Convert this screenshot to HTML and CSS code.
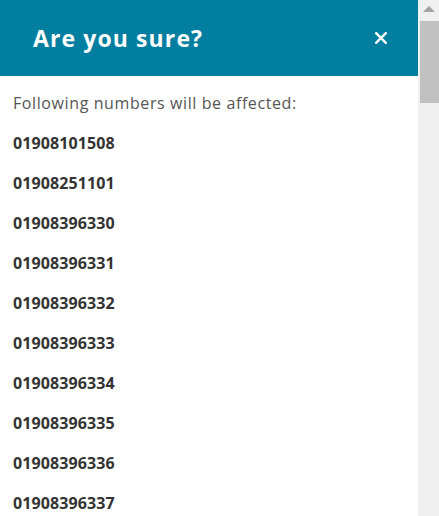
FILE: index.html
```html
<!DOCTYPE html>
<html>
<head>
<meta charset="utf-8">
<link rel="stylesheet" href="styles.css">
</head>
<body>
<div class="page">
  <div class="modal">
    <div class="modal-header">
      <h1 class="modal-title">Are you sure?</h1>
      <svg class="close" width="12" height="12" viewBox="0 0 12 12"><path d="M1.2 1.2 L10.8 10.8 M10.8 1.2 L1.2 10.8" stroke="#fff" stroke-width="2.4" stroke-linecap="square"/></svg>
    </div>
    <div class="modal-body">
      <p class="intro">Following numbers will be affected:</p>
      <p class="num">01908101508</p>
      <p class="num">01908251101</p>
      <p class="num">01908396330</p>
      <p class="num">01908396331</p>
      <p class="num">01908396332</p>
      <p class="num">01908396333</p>
      <p class="num">01908396334</p>
      <p class="num">01908396335</p>
      <p class="num">01908396336</p>
      <p class="num">01908396337</p>
    </div>
  </div>
  <div class="scrollbar">
    <div class="arrow"></div>
    <div class="thumb"></div>
  </div>
</div>
</body>
</html>
```
FILE: styles.css
```css
html, body {
  margin: 0;
  padding: 0;
  height: 100%;
  overflow: hidden;
  background: #fff;
}
.page {
  display: flex;
  height: 516px;
  font-family: "Open Sans", sans-serif;
}
.modal {
  width: 418px;
  flex: none;
  background: #fff;
}
.modal-header {
  height: 76px;
  background: #017ea0;
  display: flex;
  align-items: center;
  justify-content: space-between;
  padding: 0 31px 0 33px;
  box-sizing: border-box;
}
.modal-title {
  margin: 0;
  color: #fff;
  font-size: 23px;
  font-weight: 700;
  letter-spacing: 1.1px;
}
.close {
  display: block;
}
.modal-body {
  padding: 7px 13px 0;
}
.modal-body p {
  margin: 0;
  height: 40px;
  line-height: 40px;
}
.intro {
  font-size: 16px;
  font-weight: 400;
  letter-spacing: 0.6px;
  color: #555;
}
.num {
  font-size: 16px;
  font-weight: 700;
  letter-spacing: 0.1px;
  color: #333;
}
.scrollbar {
  width: 21px;
  flex: none;
  background: #f0f0f0;
  display: flex;
  flex-direction: column;
  align-items: flex-end;
}
.arrow {
  width: 0;
  height: 0;
  margin: 6px 4px 9px 0;
  border-left: 6px solid transparent;
  border-right: 6px solid transparent;
  border-bottom: 6px solid #a3a3a3;
}
.thumb {
  width: 19px;
  height: 82px;
  background: #c1c1c1;
}
```
